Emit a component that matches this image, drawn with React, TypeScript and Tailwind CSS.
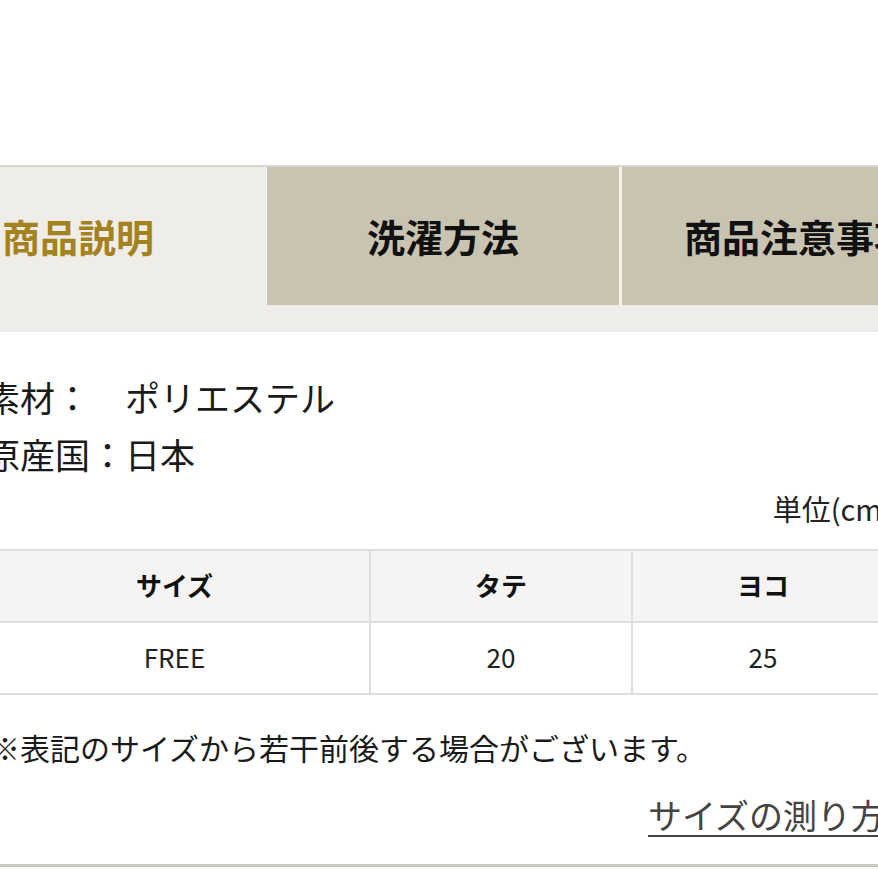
import React from "react";

export default function App() {
  const font = { fontFamily: '"Noto Sans CJK JP", "Noto Sans", sans-serif' };
  return (
    <div
      className="w-[878px] h-[878px] overflow-hidden bg-white text-[#111]"
      style={font}
    >
      <div className="h-[165px]" />
      {/* tabs */}
      <div className="border-t-2 border-[#d8d6d0] bg-[#f0eeea]">
        <div className="flex h-[138px] -ml-[86px] w-[1000px]">
          <div className="w-[352px] shrink-0 bg-[#efede8] flex items-center justify-center pr-[24px]">
            <span className="text-[38px] font-bold text-[#a3821f] leading-none">商品説明</span>
          </div>
          <div className="w-[1px] shrink-0 bg-[#f3f1ec]" />
          <div className="w-[352px] shrink-0 bg-[#c9c4b1] flex items-center justify-center">
            <span className="text-[38px] font-bold leading-none">洗濯方法</span>
          </div>
          <div className="w-[3px] shrink-0 bg-[#f6f3e4]" />
          <div className="w-[356px] shrink-0 bg-[#c9c4b1] flex items-center justify-center pr-[4px]">
            <span className="text-[38px] font-bold leading-none whitespace-nowrap">商品注意事項</span>
          </div>
        </div>
        <div className="h-[27px] bg-[#f0eeea]" />
      </div>

      {/* content */}
      <div className="-ml-[20px] w-[920px] flex flex-col">
        <div className="pl-[5px] mt-[36px] text-[35px] leading-[57px] whitespace-nowrap text-[#1a1a1a]">
          <div>素材：　ポリエステル</div>
          <div>原産国：日本</div>
        </div>
        <div className="mt-[6px] text-right pr-[8px] text-[29px] leading-[40px] whitespace-nowrap text-[#222]">
          単位(cm)
        </div>
        <div className="mt-[21px] grid grid-cols-[391px_262px_262px] border-t-2 border-b-2 border-[#dedede]">
          <div className="h-[70px] pb-[4px] bg-[#f5f4f2] flex items-center justify-center text-[26px] font-bold border-r-2 border-[#dedede]">サイズ</div>
          <div className="h-[70px] pb-[4px] bg-[#f5f4f2] flex items-center justify-center text-[26px] font-bold border-r-2 border-[#dedede]">タテ</div>
          <div className="h-[70px] pb-[4px] bg-[#f5f4f2] flex items-center justify-center text-[26px] font-bold border-r-2 border-[#dedede]">ヨコ</div>
          <div className="h-[72px] pb-[4px] bg-white flex items-center justify-center text-[26px] border-t-2 border-r-2 border-[#dedede] text-[#222]">FREE</div>
          <div className="h-[72px] pb-[4px] bg-white flex items-center justify-center text-[26px] border-t-2 border-r-2 border-[#dedede] text-[#222]">20</div>
          <div className="h-[72px] pb-[4px] bg-white flex items-center justify-center text-[26px] border-t-2 border-r-2 border-[#dedede] text-[#222]">25</div>
        </div>
        <div className="mt-[30px] pl-[10px] text-[30px] leading-[44px] whitespace-nowrap text-[#1a1a1a]">
          ※表記のサイズから若干前後する場合がございます。
        </div>
        <div className="mt-[21px] pl-[668px] text-[34px] leading-[50px] whitespace-nowrap text-[#444]">
          <span className="underline decoration-2 underline-offset-[6px]">サイズの測り方</span>
        </div>
        <div className="mt-[24px] h-[3px] bg-[#cbc9bc]" />
      </div>
    </div>
  );
}
